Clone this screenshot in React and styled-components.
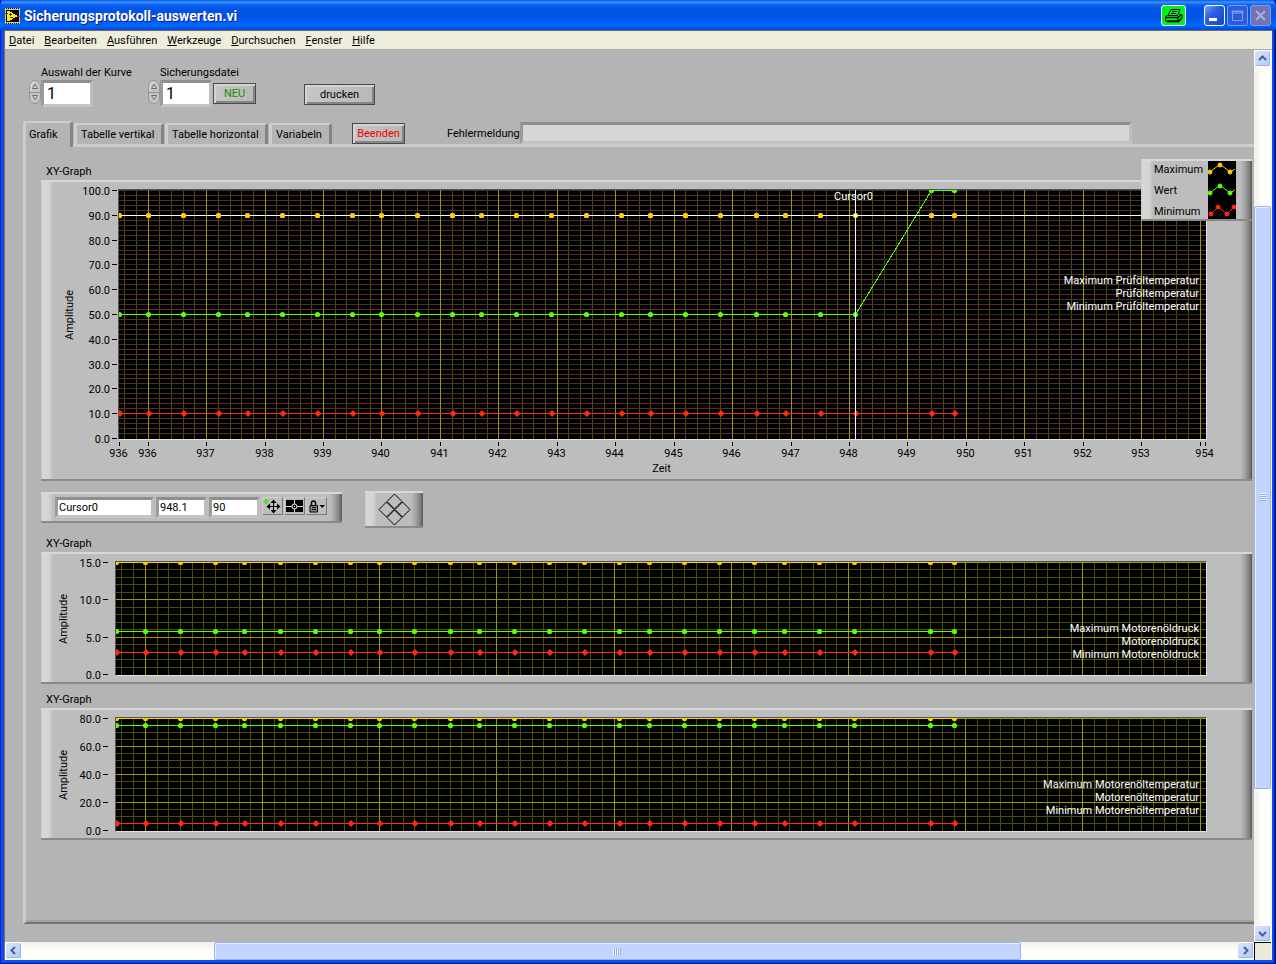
import React, { useLayoutEffect, useRef, useState } from "react";
import styled, { createGlobalStyle, css } from "styled-components";

const GlobalStyle = createGlobalStyle`
  *, *::before, *::after { box-sizing: border-box; }
  body { margin: 0; font: 11px/14px Roboto, "Liberation Sans", sans-serif; color: #000; background: #b4b4b4; }
  button, input { font: inherit; color: inherit; margin: 0; border-radius: 0; }
  svg { display: block; }
  svg text { font: 11px Roboto, "Liberation Sans", sans-serif; }
`;

const C = {
  panel: "#b4b4b4",
  frame: "#bdbdbd",
  max: "#ffcc00",
  value: "#5cff00",
  min: "#ff2a10",
};

/* ---------- window ---------- */

const Window = styled.div`
  display: flex;
  flex-direction: column;
  min-height: 100vh;
  padding: 0 4px 4px;
  background: #0a4fe6;
  box-shadow: inset 1px 0 #0019cf, inset -1px -1px #00138c, inset -2px 0 #001ea0;
`;

const TitleBar = styled.header`
  display: flex;
  align-items: center;
  height: 30px;
  margin: 0 -4px;
  padding: 1px 5px 0 5px;
  border-radius: 6px 6px 0 0;
  background: linear-gradient(#0058e6 0, #3a93ff 2px, #0a5df0 5px, #0054e3 10px, #0055e5 16px, #0066ff 25px, #0060f8 27px, #0043cf 30px);
`;

const Title = styled.h1`
  flex: 1;
  margin: 0 0 0 3px;
  font: bold 14px/18px Roboto, "Liberation Sans", sans-serif;
  color: #fff;
  text-shadow: 1px 1px #0a1883;
`;

const PrintBadge = styled.button`
  width: 25px;
  height: 21px;
  margin-right: 16px;
  padding: 1px;
  border: 1px solid #fff;
  border-radius: 3px;
  background: #00f01e;
`;

const WindowButton = styled.button`
  width: 21px;
  height: 21px;
  margin-left: 2px;
  padding: 0;
  border: 1px solid ${(p) => (p.$dim ? "#7d9cf0" : "#fff")};
  border-radius: 3px;
  background: ${(p) => p.$bg || "linear-gradient(135deg, #7aa3f5, #2a5fe0 40%, #1746c8)"};
`;

const MenuBar = styled.nav`
  display: flex;
  gap: 10px;
  height: 20px;
  padding: 2px 4px 0;
  border-top: 1px solid #716f64;
  border-left: 1px solid #716f64;
  border-bottom: 1px solid #aca899;
  background: #efeddc;
`;

const MenuItem = styled.a`
  color: #000;
  text-decoration: none;
  line-height: 16px;
`;

const Client = styled.div`
  flex: 1;
  display: grid;
  grid-template-columns: minmax(0, 1fr) 17px;
  grid-template-rows: 1fr 18px;
  border-left: 1px solid #716f64;
  border-right: 1px solid #f4f2e8;
`;

const Front = styled.main`
  display: flex;
  flex-direction: column;
  overflow: hidden;
  padding-bottom: 18px;
  background: ${C.panel};
`;

/* ---------- scroll bars ---------- */

const Track = styled.div`
  display: flex;
  flex-direction: ${(p) => (p.$vertical ? "column" : "row")};
  background: linear-gradient(${(p) => (p.$vertical ? "to right" : "to bottom")}, #f0efe8, #fefefb 45%);
`;

const ScrollButton = styled.button`
  flex: none;
  display: flex;
  align-items: center;
  justify-content: center;
  width: 17px;
  height: 17px;
  padding: 0;
  border: 1px solid #fff;
  border-radius: 2px;
  box-shadow: inset -1px -1px #98b4ee;
  background: linear-gradient(135deg, #d8e4fe, #b4cafb);
`;

const Gap = styled.div`
  flex: ${(p) => p.$share} 0 0px;
`;

const Thumb = styled.div`
  flex: ${(p) => p.$share} 0 0px;
  display: flex;
  align-items: center;
  justify-content: center;
  border: 1px solid #98b4ee;
  border-radius: 2px;
  box-shadow: inset 1px 1px #e6eeff;
  background: #c4d4fd;
`;

const Grip = styled.div`
  ${(p) =>
    p.$vertical
      ? css`width: 7px; height: 8px; background: repeating-linear-gradient(#eef4fe 0 1px, #8cb0f8 1px 2px);`
      : css`width: 8px; height: 7px; background: repeating-linear-gradient(to right, #eef4fe 0 1px, #8cb0f8 1px 2px);`}
`;

const Corner = styled.div`
  border-top: 1px solid #000;
  border-left: 1px solid #000;
  background: #ece9d8;
`;

/* ---------- controls ---------- */

const ControlRow = styled.div`
  display: flex;
  align-items: flex-start;
  height: 71px;
  padding: 16px 0 0 24px;
`;

const Control = styled.div`
  display: grid;
  grid-template-columns: 12px 52px;
  grid-template-rows: 14px 28px;
  margin-right: ${(p) => p.$after}px;
`;

const ControlLabel = styled.label`
  grid-column: 2;
  white-space: nowrap;
`;

const Spinner = styled.button`
  width: 12px;
  height: 25px;
  padding: 0;
  border: 0;
  background: none;
`;

const sunken = css`
  border: solid;
  border-width: 3px 3px 3px 3px;
  border-color: #8e8e8e #bebebe #c4c4c4 #9a9a9a;
  outline: 0;
`;

const NumberBox = styled.input`
  ${sunken}
  width: 52px;
  height: 27px;
  padding: 0 3px;
  font-size: 16px;
  background: #fff;
`;

const PushButton = styled.button`
  width: ${(p) => p.$w}px;
  height: 21px;
  margin: ${(p) => p.$top || 0}px 0 0 ${(p) => p.$before}px;
  padding: 1px 0 0;
  border: 1px solid #4a4a4a;
  box-shadow: inset 2px 2px #d4d4d4, inset -2px -2px #858585;
  background: linear-gradient(to right, #c6c6c6, #b8b8b8);
  color: ${(p) => p.$color || "#000"};
  line-height: 14px;
`;

const TabRow = styled.div`
  display: flex;
  align-items: flex-end;
  height: 23px;
  margin-left: 18px;
`;

const Tabs = styled.div`
  display: flex;
  align-items: flex-end;
`;

const Tab = styled.button`
  position: relative;
  height: 21px;
  width: ${(p) => p.$w}px;
  margin-right: 1px;
  padding: 0 0 0 4px;
  border: solid;
  border-width: 2px 3px 0 3px;
  border-color: #cdcdcd #858585 #b4b4b4 #cdcdcd;
  border-radius: 2px 2px 0 0;
  background: ${C.panel};
  text-align: left;
  white-space: nowrap;
  line-height: 18px;
  ${(p) =>
    p["aria-selected"] &&
    css`
      z-index: 1;
      height: 26px;
      margin-bottom: -3px;
      padding: 0 0 0 3px;
    `}
`;

const ErrorLabel = styled.label`
  width: 73px;
  margin: 0 0 3px 42px;
`;

const ErrorBox = styled.input`
  ${sunken}
  flex: 1;
  min-width: 0;
  height: 22px;
  margin: 0 122px 0 0;
  background: #d6d6d6;
`;

const Page = styled.section`
  flex: 1;
  margin-left: 18px;
  padding: 17px 2px 16px 15px;
  border: solid;
  border-width: 3px 0 2px 3px;
  border-color: #cdcdcd #b4b4b4 #737373 #cdcdcd;
  box-shadow: inset 0 -2px #a2a2a2;
`;

/* ---------- graphs ---------- */

const Graph = styled.figure`
  position: relative;
  margin: 0 0 8px;
`;

const GraphTitle = styled.figcaption`
  height: 16px;
  padding: 1px 0 0 5px;
`;

const raised = css`
  box-shadow: inset 0 2px #d8d8d8, inset 0 -2px #8a8a8a;
  background: linear-gradient(to left, #585858 0, #828282 3px, #a8a8a8 8px, transparent 12px),
    linear-gradient(to right, #c8c8c8 0, #d8d8d8 2px, #d4d4d4 8px, ${C.frame} 12px);
`;

const GraphFrame = styled.div`
  ${raised}
  display: grid;
  grid-template-columns: ${(p) => p.$axis}px minmax(0, 1fr) 45px;
  padding: 9px 0 8px;
`;

const PlotBox = styled.div`
  border: 1px solid;
  border-color: #555 #e2e2e2 #e2e2e2 #555;
  background: #000;
`;

const AxisBox = styled.div`
  grid-column: 2;
  height: 33px;
`;

const Legend = styled.div`
  ${raised}
  position: absolute;
  top: -5px;
  right: 0;
  display: grid;
  grid-template-columns: 54px 28px;
  grid-template-rows: repeat(3, 21px);
  width: 111px;
  height: 62px;
  padding: 0 0 0 13px;
`;

const LegendName = styled.span`
  line-height: 21px;
`;

const LegendSwatch = styled.svg`
  width: 28px;
  height: 58px;
  grid-column: 2;
  grid-row: 1 / 4;
  margin-top: 2px;
  background: #000;
`;

const CursorRow = styled.div`
  display: flex;
  align-items: flex-start;
  gap: 23px;
  height: 37px;
  margin: 10px 0 8px;
`;

const CursorBar = styled.div`
  ${raised}
  display: flex;
  width: 301px;
  height: 31px;
  margin-top: 1px;
  padding: 5px 0 0 14px;
`;

const CursorField = styled.input`
  ${sunken}
  width: ${(p) => p.$w}px;
  height: 21px;
  margin-right: 2px;
  padding: 0 1px;
  background: #fff;
`;

const CursorButton = styled.button`
  width: 21px;
  height: 18px;
  margin-right: 1px;
  padding: 0;
  border: 1px solid;
  border-color: #d0d0d0 #7a7a7a #7a7a7a #d0d0d0;
  background: ${C.frame};
`;

const Mover = styled.button`
  ${raised}
  display: flex;
  align-items: center;
  justify-content: center;
  width: 58px;
  height: 37px;
  padding: 0;
  border: 0;
`;

/* ---------- data ---------- */

const X0 = 935.5;
const X1 = 954.1;
const times = [
  935.5, 936, 936.6, 937.2, 937.7, 938.3, 938.9, 939.5, 940, 940.6, 941.2, 941.7, 942.3,
  942.9, 943.5, 944.1, 944.6, 945.2, 945.8, 946.4, 946.9, 947.5, 948.1, 949.4, 949.8,
];
const flat = (v) => times.map(() => v);

const graphs = {
  oil: {
    axis: 77, height: 249, top: 100, major: 10, minor: 2, xStep: 1,
    tick: 71, titleX: 28,
    majorColor: "#2e2e2e", minorColor: "#4f302c",
    series: [flat(90), times.map((t) => (t > 949 ? 100 : 50)), flat(10)],
    labels: ["Maximum Prüföltemperatur", "Prüföltemperatur", "Minimum Prüföltemperatur"],
    labelY: 94,
    cursor: { x: 948.1, y: 90 },
  },
  pressure: {
    axis: 74, height: 113, top: 15, major: 5, minor: 1, xStep: 2,
    tick: 62, titleX: 22,
    majorColor: "#9c9c00", minorColor: "#4e4e00",
    series: [flat(15), flat(5.8), flat(3)],
    labels: ["Maximum Motorenöldruck", "Motorenöldruck", "Minimum Motorenöldruck"],
    labelY: 70,
  },
  motor: {
    axis: 74, height: 113, top: 80, major: 20, minor: 5, xStep: 2,
    tick: 62, titleX: 22,
    majorColor: "#9c9c00", minorColor: "#4e4e00",
    series: [flat(80), flat(75), flat(5)],
    labels: ["Maximum Motorenöltemperatur", "Motorenöltemperatur", "Minimum Motorenöltemperatur"],
    labelY: 70,
  },
};

const range = (from, to, step) => {
  const out = [];
  for (let i = 0; from + i * step <= to + 0.0001; i += 1) out.push(from + i * step);
  return out;
};

function useWidth(initial) {
  const ref = useRef(null);
  const [width, setWidth] = useState(initial);
  useLayoutEffect(() => {
    const measure = () => setWidth(ref.current.clientWidth);
    measure();
    const observer = new ResizeObserver(measure);
    observer.observe(ref.current);
    return () => observer.disconnect();
  }, []);
  return [ref, width];
}

const xAt = (w, v) => Math.floor(((v - X0) / (X1 - X0)) * w) + 0.5;
const yAt = (g, v) => Math.round((1 - v / g.top) * (g.height - 1)) + 0.5;

function Plot({ g }) {
  const [ref, w] = useWidth(1086);
  const h = g.height;
  const colors = [C.max, C.value, C.min];
  const isMajor = (v, step) => Math.abs(v / step - Math.round(v / step)) < 0.001;
  const vertical = range(935.6, X1, 0.2);
  const horizontal = range(g.minor, g.top, g.minor);
  return (
    <PlotBox ref={ref}>
      <svg width={w} height={h} role="img" aria-label={g.labels[1]}>
        <g shapeRendering="crispEdges">
          {vertical.map((v) => (
            <path key={v} d={`M${xAt(w, v)} 0V${h}`} stroke="#4e4e00" />
          ))}
          {horizontal.map((v) => (
            <path key={v} d={`M0 ${yAt(g, v)}H${w}`} stroke={isMajor(v, g.major) ? g.majorColor : g.minorColor} />
          ))}
          {range(936, 954, g.xStep).map((v) => (
            <path key={v} d={`M${xAt(w, v)} 0V${h}`} stroke="#9c9c00" />
          ))}
        </g>
        {g.series.map((values, s) => (
          <g key={s} fill={colors[s]}>
            <polyline
              points={times.map((t, i) => `${xAt(w, t)},${yAt(g, values[i])}`).join(" ")}
              fill="none"
              stroke={colors[s]}
              shapeRendering="crispEdges"
            />
            {times.map((t, i) => {
              const x = xAt(w, t);
              const y = yAt(g, values[i]);
              return s === 2 ? (
                <path key={t} d={`M${x - 3} ${y}l3.500 -3.500l3.500 3.500l-3.500 3.500z`} />
              ) : (
                <circle key={t} cx={x} cy={y} r="2.6" />
              );
            })}
          </g>
        ))}
        {g.cursor && (
          <g stroke="#fff" fill="#fff">
            <g shapeRendering="crispEdges">
              <path d={`M0 ${yAt(g, g.cursor.y)}H${w}`} />
              <path d={`M${xAt(w, g.cursor.x)} 0V${h}`} />
            </g>
            {times.filter((t) => t !== g.cursor.x).map((t) => (
              <circle key={t} cx={xAt(w, t)} cy={yAt(g, g.cursor.y)} r="2.6" fill={C.max} stroke="none" />
            ))}
            <circle cx={xAt(w, g.cursor.x)} cy={yAt(g, g.cursor.y)} r="2" fill="#fff" stroke={C.max} />
            <text x={xAt(w, g.cursor.x) - 2} y="10" textAnchor="middle" stroke="none">Cursor0</text>
          </g>
        )}
        {g.labels.map((label, i) => (
          <text key={label} x={w - 7} y={g.labelY + i * 13} textAnchor="end" fill="#fff">{label}</text>
        ))}
      </svg>
    </PlotBox>
  );
}

function YAxis({ g }) {
  const mid = Math.round(g.height / 2);
  return (
    <svg width={g.axis} height={g.height + 2} overflow="visible">
      <text transform={`translate(${g.titleX + 4} ${mid + 1}) rotate(-90)`} textAnchor="middle">Amplitude</text>
      {range(0, g.top, g.major).map((v) => (
        <g key={v}>
          <text x={g.tick - 2} y={yAt(g, v) + 5} textAnchor="end">{v.toFixed(1)}</text>
          <path d={`M${g.tick} ${yAt(g, v) + 1}h5`} stroke="#000" shapeRendering="crispEdges" />
        </g>
      ))}
    </svg>
  );
}

function XAxis() {
  const [ref, w] = useWidth(1088);
  const ticks = [X0, ...range(936, 954, 1), X1];
  return (
    <AxisBox ref={ref}>
      <svg width={w} height="33" overflow="visible">
        {ticks.map((v) => {
          const x = xAt(w - 2, v) + (v === X1 ? 0 : 1);
          return (
            <g key={v}>
              <path d={`M${x} 2v4`} stroke="#000" shapeRendering="crispEdges" />
              {v !== 954 && (
                <text x={x - 1} y="17" textAnchor="middle">{v === X0 ? 936 : Math.floor(v)}</text>
              )}
            </g>
          );
        })}
        <text x={w / 2 - 1} y="32" textAnchor="middle">Zeit</text>
      </svg>
    </AxisBox>
  );
}

function XYGraph({ g, children }) {
  return (
    <Graph>
      <GraphTitle>XY-Graph</GraphTitle>
      <GraphFrame $axis={g.axis}>
        <YAxis g={g} />
        <Plot g={g} />
        {g.cursor && <XAxis />}
      </GraphFrame>
      {children}
    </Graph>
  );
}

/* ---------- drawings ---------- */

const Chevron = ({ turn }) => (
  <svg width="9" height="9" viewBox="0 0 9 9">
    <path d="M1 6L4.5 2.5L8 6" transform={`rotate(${turn} 4.5 4.5)`} fill="none" stroke="#4d6185" strokeWidth="2" />
  </svg>
);

const AppIcon = () => (
  <svg width="16" height="16" viewBox="0 0 16 16" shapeRendering="crispEdges">
    <path d="M0 0H15V16H0z" fill="#c8c8b8" />
    <path d="M1 2H14V14H1z" fill="#000" />
    <path d="M1 .5H15M1 15.5H15" stroke="#000" strokeDasharray="1 1" />
    <path d="M2 3V13H4L13 8L4 3z" fill="#f8f000" />
    <path d="M4 6.500h3M5.500 5v3M5 9.500h3" stroke="#403800" />
    <path d="M0 5.500h3M12 8.500h4" stroke="#f01000" />
  </svg>
);

const PrinterIcon = () => (
  <svg width="21" height="17" viewBox="0 0 21 17">
    <path d="M8 2.500H17L14.500 8.500H5z" fill="none" stroke="#000" />
    <path d="M9 4.500h5M8 6.500h5" stroke="#000" />
    <path d="M4.500 8L2.500 10V14H15L19 11V8L16.500 7" fill="none" stroke="#000" />
    <path d="M2.500 10.500H15L18.500 7.500" fill="none" stroke="#000" strokeWidth="1.500" />
    <path d="M4 14.500H15.500L19 11" fill="none" stroke="#000" strokeWidth="1.500" />
    <path d="M15 10v4" stroke="#000" />
  </svg>
);

const SpinnerIcon = () => (
  <svg width="12" height="25" viewBox="0 0 12 25">
    <rect x=".5" y=".5" width="11" height="23" rx="5.500" fill="#c4c4c4" stroke="#959595" />
    <path d="M1 12.500H11" stroke="#909090" />
    <path d="M2 11V6Q3 2 6 2" fill="none" stroke="#e2e2e2" />
    <path d="M3.500 8.500L6 4.500L8.500 8.500z" fill="#d8d8d8" stroke="#6c6c6c" />
    <path d="M3.500 15.500L6 19.500L8.500 15.500z" fill="#d8d8d8" stroke="#6c6c6c" />
  </svg>
);

const MoveIcon = () => (
  <svg width="19" height="16" viewBox="0 0 19 16">
    <path d="M3 1v5M.5 3.500h5" stroke="#50e020" strokeWidth="2" />
    <path d="M10.500 3V14M5 8.500H16" stroke="#000" />
    <path d="M10.500 1.500L13.500 5H7.500zM10.500 15.500L13.500 12H7.500zM3.500 8.500L7 5.500V11.500zM17.500 8.500L14 5.500V11.500z" fill="#000" />
  </svg>
);

const CrossIcon = () => (
  <svg width="19" height="16" viewBox="0 0 19 16">
    <path d="M1 2H18V14H1z" fill="#000" />
    <path d="M9.500 2V14M1 8.500H18" stroke="#ddd" shapeRendering="crispEdges" />
    <circle cx="9.500" cy="8.500" r="2.500" fill="#000" stroke="#fff" />
    <path d="M9 8h1v1h-1z" fill="#fff" />
  </svg>
);

const LockIcon = () => (
  <svg width="19" height="16" viewBox="0 0 19 16">
    <path d="M4.500 8V5Q4.500 3 6.500 3Q8.500 3 8.500 5V8" fill="none" stroke="#000" strokeWidth="1.500" />
    <path d="M3 7.500h7.500V14H3z" fill="#888" stroke="#000" />
    <path d="M5 9.500h4M5 11.500h4" stroke="#000" />
    <path d="M12.500 7H18L15.200 10z" fill="#000" />
  </svg>
);

const MoverIcon = () => (
  <svg width="33" height="33" viewBox="0 0 33 33" fill="none" stroke="#000">
    <path d="M16.500 1L24 8.500L16.500 16L9 8.500zM16.500 17L24 24.500L16.500 32L9 24.500zM8.500 9L16 16.500L8.500 24L1 16.500zM24.500 9L32 16.500L24.500 24L17 16.500z" />
  </svg>
);

const Trace = ({ y, color, diamond }) => (
  <g fill={color} stroke={color}>
    <path
      d={diamond ? `M3 ${y + 7}L10 ${y}L19 ${y + 7}L26 ${y}` : `M2 ${y + 7}L11 ${y}H13L22 ${y + 7}L27 ${y + 4}`}
      fill="none"
    />
    {(diamond ? [[3, 7], [10, 0], [19, 7], [26, 0]] : [[2, 7], [12, 0], [22, 7]]).map(([cx, dy]) => (
      <circle key={cx} cx={cx} cy={y + dy} r="2" />
    ))}
  </g>
);

const menu = ["Datei", "Bearbeiten", "Ausführen", "Werkzeuge", "Durchsuchen", "Fenster", "Hilfe"];
const tabs = [
  ["Grafik", 50],
  ["Tabelle vertikal", 90],
  ["Tabelle horizontal", 103],
  ["Variabeln", 63],
];

function NumberControl({ id, label, after }) {
  return (
    <Control $after={after}>
      <ControlLabel htmlFor={id}>{label}</ControlLabel>
      <Spinner aria-label={`${label} ändern`}><SpinnerIcon /></Spinner>
      <NumberBox id={id} defaultValue="1" />
    </Control>
  );
}

export default function App() {
  const [tab, setTab] = useState("Grafik");
  return (
    <Window>
      <GlobalStyle />
      <TitleBar>
        <AppIcon />
        <Title>Sicherungsprotokoll-auswerten.vi</Title>
        <PrintBadge aria-label="Drucken"><PrinterIcon /></PrintBadge>
        <WindowButton aria-label="Minimieren">
          <svg width="19" height="19"><path d="M4 12h8v3H4z" fill="#fff" /></svg>
        </WindowButton>
        <WindowButton aria-label="Maximieren" $dim $bg="#2a5ce0">
          <svg width="19" height="19"><path d="M4.500 5.500h10v9h-10zM4 5h11v2H4z" fill="none" stroke="#7f9ff2" /></svg>
        </WindowButton>
        <WindowButton aria-label="Schließen" $dim $bg="#7272b4">
          <svg width="19" height="19"><path d="M5 5L14 14M14 5L5 14" stroke="#a9b2e2" strokeWidth="2" /></svg>
        </WindowButton>
      </TitleBar>
      <MenuBar>
        {menu.map((m) => (
          <MenuItem key={m} href="#"><u>{m[0]}</u>{m.slice(1)}</MenuItem>
        ))}
      </MenuBar>
      <Client>
        <Front>
          <ControlRow>
            <NumberControl id="curve" label="Auswahl der Kurve" after={55} />
            <NumberControl id="file" label="Sicherungsdatei" after={0} />
            <PushButton $w={43} $before={1} $top={17} $color="#1e8a00">NEU</PushButton>
            <PushButton $w={71} $before={48} $top={18}>drucken</PushButton>
          </ControlRow>
          <TabRow>
            <Tabs role="tablist">
              {tabs.map(([name, w]) => (
                <Tab key={name} role="tab" aria-selected={tab === name} $w={w} onClick={() => setTab(name)}>
                  {name}
                </Tab>
              ))}
            </Tabs>
            <PushButton $w={53} $before={19} $color="#f00000">Beenden</PushButton>
            <ErrorLabel htmlFor="error">Fehlermeldung</ErrorLabel>
            <ErrorBox id="error" readOnly />
          </TabRow>
          <Page>
            <XYGraph g={graphs.oil}>
              <Legend>
                <LegendName>Maximum</LegendName>
                <LegendName>Wert</LegendName>
                <LegendName>Minimum</LegendName>
                <LegendSwatch viewBox="0 0 28 58">
                  <Trace y={4} color={C.max} />
                  <Trace y={25} color={C.value} />
                  <Trace y={46} color={C.min} diamond />
                </LegendSwatch>
              </Legend>
            </XYGraph>
            <CursorRow>
              <CursorBar>
                <CursorField aria-label="Cursorname" $w={99} defaultValue="Cursor0" />
                <CursorField aria-label="Cursor X" $w={51} defaultValue="948.1" />
                <CursorField aria-label="Cursor Y" $w={51} defaultValue="90" />
                <CursorButton aria-label="Cursor verschieben"><MoveIcon /></CursorButton>
                <CursorButton aria-label="Cursorstil"><CrossIcon /></CursorButton>
                <CursorButton aria-label="Cursor sperren"><LockIcon /></CursorButton>
              </CursorBar>
              <Mover aria-label="Cursor bewegen"><MoverIcon /></Mover>
            </CursorRow>
            <XYGraph g={graphs.pressure} />
            <XYGraph g={graphs.motor} />
          </Page>
        </Front>
        <Track $vertical>
          <ScrollButton aria-label="Nach oben"><Chevron turn={0} /></ScrollButton>
          <Gap $share={139} />
          <Thumb $share={584}><Grip $vertical /></Thumb>
          <Gap $share={136} />
          <ScrollButton aria-label="Nach unten"><Chevron turn={180} /></ScrollButton>
        </Track>
        <Track>
          <ScrollButton aria-label="Nach links"><Chevron turn={-90} /></ScrollButton>
          <Gap $share={192} />
          <Thumb $share={807}><Grip /></Thumb>
          <Gap $share={217} />
          <ScrollButton aria-label="Nach rechts"><Chevron turn={90} /></ScrollButton>
        </Track>
        <Corner />
      </Client>
    </Window>
  );
}
